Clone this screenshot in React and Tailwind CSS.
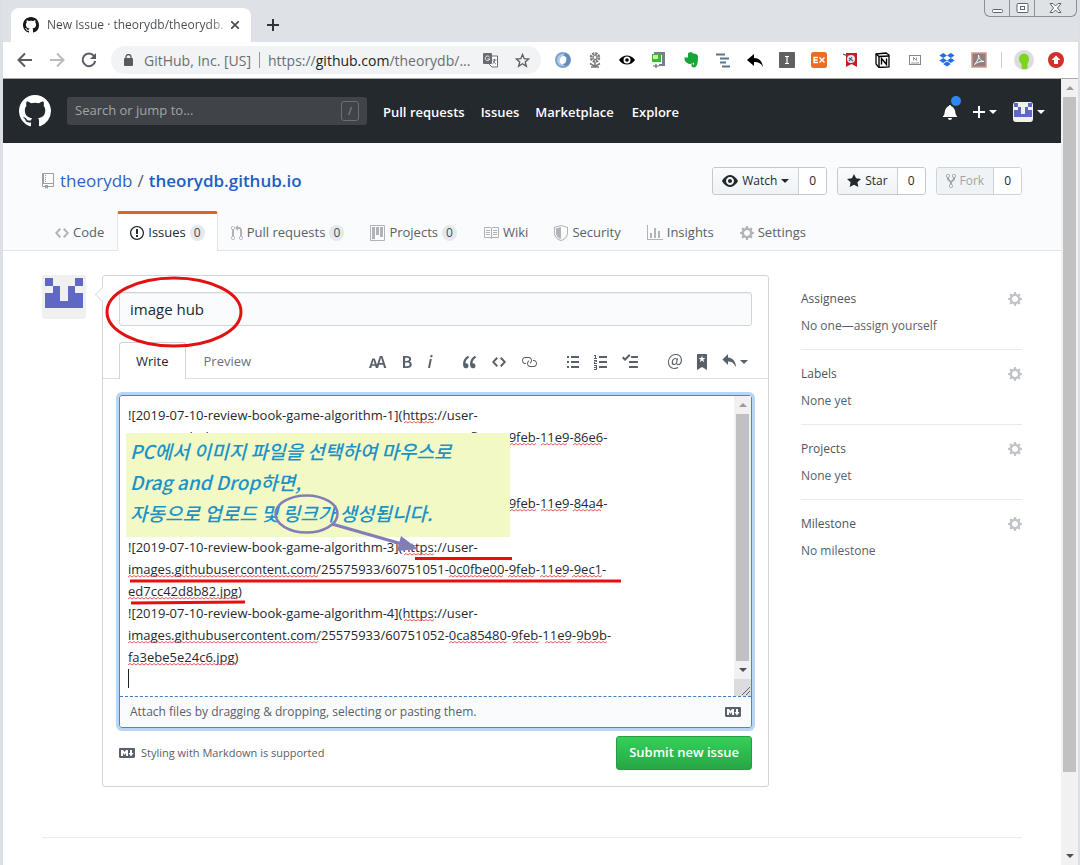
import React from "react";

const P = {
  mark: [16, "M8 0C3.58 0 0 3.58 0 8c0 3.54 2.29 6.53 5.47 7.59.4.07.55-.17.55-.38 0-.19-.01-.82-.01-1.49-2.01.37-2.53-.49-2.69-.94-.09-.23-.48-.94-.82-1.13-.28-.15-.68-.52-.01-.53.63-.01 1.08.58 1.23.82.72 1.21 1.87.87 2.33.66.07-.52.28-.87.51-1.07-1.78-.2-3.64-.89-3.64-3.95 0-.87.31-1.59.82-2.15-.08-.2-.36-1.02.08-2.12 0 0 .67-.21 2.2.82.64-.18 1.32-.27 2-.27.68 0 1.36.09 2 .27 1.53-1.04 2.2-.82 2.2-.82.44 1.1.16 1.92.08 2.12.51.56.82 1.27.82 2.15 0 3.07-1.87 3.75-3.65 3.95.29.25.54.73.54 1.48 0 1.07-.01 1.93-.01 2.2 0 .21.15.46.55.38A8.013 8.013 0 0 0 16 8c0-4.42-3.58-8-8-8z"],
  code: [14, "M9.5 3L8 4.5 11.5 8 8 11.5 9.5 13 14 8 9.5 3zm-5 0L0 8l4.5 5L6 11.5 2.5 8 6 4.5 4.5 3z"],
  issue: [14, "M7 2.3c3.14 0 5.7 2.56 5.7 5.7s-2.56 5.7-5.7 5.7A5.71 5.71 0 0 1 1.3 8c0-3.14 2.56-5.7 5.7-5.7zM7 1C3.14 1 0 4.14 0 8s3.14 7 7 7 7-3.14 7-7-3.14-7-7-7zm1 3H6v5h2V4zm0 6H6v2h2v-2z"],
  pull: [12, "M11 11.28V5c-.03-.78-.34-1.47-.94-2.06C9.46 2.35 8.78 2.03 8 2H7V0L4 3l3 3V4h1c.27.02.48.11.69.31.21.2.3.42.31.69v6.28A1.993 1.993 0 0 0 10 15a1.993 1.993 0 0 0 1-3.72zm-1 2.92c-.66 0-1.2-.55-1.2-1.2 0-.65.55-1.2 1.2-1.2.65 0 1.2.55 1.2 1.2 0 .65-.55 1.2-1.2 1.2zM4 3c0-1.11-.89-2-2-2a1.993 1.993 0 0 0-1 3.72v6.56A1.993 1.993 0 0 0 2 15a1.993 1.993 0 0 0 1-3.72V4.72c.59-.34 1-.98 1-1.72zm-.8 10c0 .66-.55 1.2-1.2 1.2-.65 0-1.2-.55-1.2-1.2 0-.65.55-1.2 1.2-1.2.65 0 1.2.55 1.2 1.2zM2 4.2C1.34 4.2.8 3.65.8 3c0-.65.55-1.2 1.2-1.2.65 0 1.2.55 1.2 1.2 0 .65-.55 1.2-1.2 1.2z"],
  project: [15, "M10 12h3V2h-3v10zm-4-2h3V2H6v8zm-4 4h3V2H2v12zm-1 1h13V1H1v14zM14 0H1a1 1 0 0 0-1 1v14a1 1 0 0 0 1 1h13a1 1 0 0 0 1-1V1a1 1 0 0 0-1-1z"],
  book: [16, "M3 5h4v1H3V5zm0 3h4V7H3v1zm0 2h4V9H3v1zm11-5h-4v1h4V5zm0 2h-4v1h4V7zm0 2h-4v1h4V9zm2-6v9c0 .55-.45 1-1 1H9.5l-1 1-1-1H2c-.55 0-1-.45-1-1V3c0-.55.45-1 1-1h5.5l1 1 1-1H15c.55 0 1 .45 1 1zm-8 .5L7.5 3H2v9h6V3.5zm7-.5H9.5l-.5.5V12h6V3z"],
  shield: [14, "M0 2l7-2 7 2v6.02C14 12.69 8.69 16 7 16c-1.69 0-7-3.31-7-7.98V2zm1 .75L7 1l6 1.75v5.268C13 12.104 8.449 15 7 15c-1.449 0-6-2.896-6-6.982V2.75zm1 .75L7 2v12c-1.207 0-5-2.482-5-5.985V3.5z"],
  graph: [16, "M16 14v1H0V0h1v14h15zM5 13H3V8h2v5zm4 0H7V3h2v10zm4 0h-2V6h2v7z"],
  gear: [14, "M14 8.77v-1.6l-1.94-.64-.45-1.09.88-1.84-1.13-1.13-1.81.91-1.09-.45-.69-1.92h-1.6l-.63 1.94-1.11.45-1.84-.88-1.13 1.13.91 1.81-.45 1.09L0 7.23v1.59l1.94.64.45 1.09-.88 1.84 1.13 1.13 1.81-.91 1.09.45.69 1.92h1.59l.63-1.94 1.11-.45 1.84.88 1.13-1.13-.92-1.81.47-1.09L14 8.75v.02zM7 11c-1.66 0-3-1.34-3-3s1.34-3 3-3 3 1.34 3 3-1.34 3-3 3z"],
  repo: [12, "M4 9H3V8h1v1zm0-3H3v1h1V6zm0-2H3v1h1V4zm0-2H3v1h1V2zm8-1v12c0 .55-.45 1-1 1H6v2l-1.5-1.5L3 16v-2H1c-.55 0-1-.45-1-1V1c0-.55.45-1 1-1h10c.55 0 1 .45 1 1zm-1 10H1v2h2v-1h3v1h5v-2zm0-10H2v9h9V1z"],
  eye: [16, "M8.06 2C3 2 0 8 0 8s3 6 8.06 6C13 14 16 8 16 8s-3-6-7.94-6zM8 12c-2.2 0-4-1.78-4-4 0-2.2 1.8-4 4-4 2.22 0 4 1.8 4 4 0 2.22-1.78 4-4 4zm2-4c0 1.11-.89 2-2 2-1.11 0-2-.89-2-2 0-1.11.89-2 2-2 1.11 0 2 .89 2 2z"],
  star: [14, "M14 6l-4.9-.64L7 1 4.9 5.36 0 6l3.6 3.26L2.67 14 7 11.67 11.33 14l-.93-4.74L14 6z"],
  fork: [10, "M8 1a1.993 1.993 0 0 0-1 3.72V6L5 8 3 6V4.72A1.993 1.993 0 0 0 2 1a1.993 1.993 0 0 0-1 3.72V6.5l3 3v1.78A1.993 1.993 0 0 0 5 15a1.993 1.993 0 0 0 1-3.72V9.5l3-3V4.72A1.993 1.993 0 0 0 8 1zM2 4.2C1.34 4.2.8 3.65.8 3c0-.65.55-1.2 1.2-1.2.65 0 1.2.55 1.2 1.2 0 .65-.55 1.2-1.2 1.2zm3 10c-.66 0-1.2-.55-1.2-1.2 0-.65.55-1.2 1.2-1.2.65 0 1.2.55 1.2 1.2 0 .65-.55 1.2-1.2 1.2zm3-10c-.66 0-1.2-.55-1.2-1.2 0-.65.55-1.2 1.2-1.2.65 0 1.2.55 1.2 1.2 0 .65-.55 1.2-1.2 1.2z"],
  bell: [14, "M13.99 11.991v1H0v-1l.73-.58c.769-.769.809-2.547 1.189-4.416.77-3.767 4.077-4.996 4.077-4.996 0-.55.45-1 .999-1 .55 0 1 .45 1 1 0 0 3.387 1.229 4.156 4.996.38 1.879.42 3.657 1.19 4.417l.659.58h-.01zM6.995 15.99c1.11 0 1.999-.89 1.999-1.999H4.996c0 1.11.89 1.999 1.999 1.999z"],
  plus: [12, "M12 9H7v5H5V9H0V7h5V2h2v5h5v2z"],
  size: [18, "M13.62 9.08L12.1 3.66h-.06l-1.5 5.42h3.08zM5.7 10.13S4.68 6.52 4.53 6.02h-.08l-1.13 4.11H5.7zM17.31 14h-2.25l-.95-3.25h-4.07L9.09 14H6.84l-.69-2.33H2.87L2.17 14H0l3.3-9.59h2.5l2.17 6.34L10.86 2h2.52l3.94 12h-.01z"],
  bold: [10, "M1 2h3.83c2.48 0 4.3.75 4.3 2.95 0 1.14-.63 2.23-1.67 2.61v.06c1.33.3 2.3 1.23 2.3 2.86 0 2.39-1.97 3.52-4.61 3.52H1V2zm3.66 4.95c1.67 0 2.38-.66 2.38-1.69 0-1.17-.78-1.61-2.34-1.61H3.13v3.3h1.53zm.27 5.39c1.77 0 2.75-.64 2.75-1.98 0-1.27-.95-1.81-2.75-1.81h-1.8v3.8h1.8v-.01z"],
  italic: [6, "M2.81 5h1.98L3 14H1l1.81-9zm.36-2.7c0-.7.58-1.3 1.33-1.3.56 0 1.13.38 1.13 1.03 0 .75-.59 1.3-1.33 1.3-.58 0-1.13-.38-1.13-1.03z"],
  quote: [14, "M6.16 3.5C3.73 5.06 2.55 6.67 2.55 9.36c.16-.05.3-.05.44-.05 1.27 0 2.5.86 2.5 2.41 0 1.61-1.03 2.61-2.5 2.61-1.9 0-2.99-1.52-2.99-4.25 0-3.8 1.75-6.53 5.02-8.42L6.16 3.5zm7 0c-2.43 1.56-3.61 3.17-3.61 5.86.16-.05.3-.05.44-.05 1.27 0 2.5.86 2.5 2.41 0 1.61-1.03 2.61-2.5 2.61-1.89 0-2.98-1.52-2.98-4.25 0-3.8 1.75-6.53 5.02-8.42l1.14 1.84h-.01z"],
  link: [16, "M4 9h1v1H4c-1.5 0-3-1.69-3-3.5S2.55 3 4 3h4c1.45 0 3 1.69 3 3.5 0 1.41-.91 2.72-2 3.25V8.59c.58-.45 1-1.27 1-2.09C10 5.22 8.98 4 8 4H4c-.98 0-2 1.22-2 2.5S3 9 4 9zm9-3h-1v1h1c1 0 2 1.22 2 2.5S13.98 12 13 12H9c-.98 0-2-1.22-2-2.5 0-.83.42-1.64 1-2.09V6.25c-1.09.53-2 1.84-2 3.25C6 11.31 7.55 13 9 13h4c1.45 0 3-1.69 3-3.5S14.5 6 13 6z"],
  list: [12, "M0 2h2v2H0zM4 2h8v2H4zM0 7h2v2H0zM4 7h8v2H4zM0 12h2v2H0zM4 12h8v2H4z"],
  ordered: [13, "M5 2h8v2H5zM5 7h8v2H5zM5 12h8v2H5zM1 1h1v3h1v1H0V4h1V2H0V1zM0 6h3v2H1v1h2v1H0V7.500h2V7H0zM0 11h3v5H0v-1h2v-1H0v-1h2v-1H0z"],
  tasks: [16, "M15.41 9H7.59C7 9 7 8.59 7 8c0-.59 0-1 .59-1h7.81c.59 0 .59.41.59 1 0 .59 0 1-.59 1h.01zM9.59 4C9 4 9 3.59 9 3c0-.59 0-1 .59-1h5.81c.59 0 .59.41.59 1 0 .59 0 1-.59 1H9.59zM0 3.91l1.41-1.3L3 4.2 7.09 0 8.5 1.41 3 6.91l-3-3zm7.59 8.09h7.81c.59 0 .59.41.59 1 0 .59 0 1-.59 1H7.59C7 14 7 13.59 7 13c0-.59 0-1 .59-1z"],
  mention: [14, "M6.58 15c1.25 0 2.52-.31 3.56-.94l-.42-.94c-.84.52-1.89.83-3.03.83-3.23 0-5.64-2.08-5.64-5.72 0-4.37 3.23-7.18 6.58-7.18 3.45 0 5.22 2.19 5.22 5.2 0 2.39-1.34 3.86-2.5 3.86-1.05 0-1.36-.73-1.05-2.19l.73-3.75H8.98l-.11.72c-.41-.63-.94-.83-1.56-.83-2.19 0-3.66 2.39-3.66 4.38 0 1.67.94 2.61 2.3 2.61.84 0 1.67-.53 2.3-1.25.11.94.94 1.45 1.98 1.45 1.67 0 3.77-1.67 3.77-5C14 2.61 11.59 0 7.83 0 3.66 0 0 3.33 0 8.33 0 12.71 2.92 15 6.58 15zm-.31-5c-.73 0-1.36-.52-1.36-1.67 0-1.45.94-3.22 2.41-3.22.52 0 .84.2 1.25.83l-.52 3.02c-.63.73-1.25 1.05-1.78 1.05V10z"],
  bookmark: [10, "M9 0H1C.27 0 0 .27 0 1v15l5-3.09L10 16V1c0-.73-.27-1-1-1zm-.78 4.25L6.36 5.61l.72 2.16c.06.22-.02.28-.2.17L5 6.6 3.12 7.94c-.19.11-.25.05-.2-.17l.72-2.16-1.86-1.36c-.17-.16-.14-.23.09-.23l2.3-.03.7-2.16h.25l.7 2.16 2.3.03c.23 0 .27.08.09.23h.01z"],
  reply: [14, "M6 3.5c3.92.44 8 3.125 8 10-2.312-5.062-4.75-6-8-6V11L.5 5.5 6 0v3.5z"],
  markdown: [16, "M14.85 3H1.15C.52 3 0 3.52 0 4.15v7.69C0 12.48.52 13 1.15 13h13.69c.64 0 1.15-.52 1.15-1.15v-7.7C16 3.52 15.48 3 14.85 3zM9 11H7V8L5.5 9.92 4 8v3H2V5h2l1.5 2L7 5h2v6zm2.99.5L9.5 8H11V5h2v3h1.500l-2.51 3.500z"],
};

function Oct({ name, size = 16, className = "" }) {
  const [w, d] = P[name];
  return (
    <svg aria-hidden="true" className={`shrink-0 ${className}`} width={(w * size) / 16} height={size} viewBox={`0 0 ${w} 16`} fill="currentColor">
      <path fillRule="evenodd" d={d} />
    </svg>
  );
}

function Caret({ className = "" }) {
  return <span aria-hidden="true" className={`inline-block border-x-4 border-t-4 border-x-transparent border-t-current ${className}`} />;
}

function Identicon({ className }) {
  return (
    <svg aria-hidden="true" className={className} viewBox="0 0 44 44" shapeRendering="crispEdges">
      <rect width="44" height="44" fill="#f0f0f0" />
      <path fill="#5f68c3" d="M3 3h8v8H3zM33 3h8v8h-8zM11 11h7v15h8V11h7v7h8v15H3V18h8z" />
    </svg>
  );
}

const extensions = [
  ["Dashboard", <><circle cx="8" cy="8" r="8" fill="#7fa2cb" /><circle cx="8" cy="8" r="6" fill="#b4cce6" /><path d="M10 1a7 7 0 0 1 3 12c-2 1-4 1-5-1 3 0 4-3 3-6-1-1-2-1-3-1z" fill="#5f8cbb" /><ellipse cx="8" cy="8" rx="3" ry="4" fill="#fff" transform="rotate(25 8 8)" /></>],
  ["Flower", <g fill="none" stroke="#777"><circle cx="8" cy="5.500" r="4" strokeWidth="2.500" strokeDasharray="2.200 .9" /><circle cx="8" cy="5.500" r="2" strokeWidth="1.200" /><path d="M8 10v5M3 11.500l5 3 5-3M4 15h8" strokeWidth="1.500" /></g>],
  ["Viewer", <><path d="M0 8c4-6 12-6 16 0-4 6-12 6-16 0z" fill="#000" /><circle cx="8" cy="8" r="3.500" fill="#fff" /><circle cx="8" cy="8" r="1.800" fill="#000" /></>],
  ["Capture", <><path d="M3 3V0h11v14H8v-2h3V3z" fill="#74808b" /><rect x="1" y="2" width="9" height="8" fill="#3fb634" /><rect x="2" y="3" width="5" height="4" fill="#c3f4a4" /><path d="M2 14h6M5 12v4" stroke="#667" strokeWidth="1.200" /></>],
  ["Evernote", <path d="M5 1.500C6 .2 9-.2 10 1.500c3 .3 5 .8 5 3 0 4-.3 11-4 11-3.200 0-3.600-4-.8-4v1.600c1 .1 1.300-2 .2-2.600-.8 1.500-3 1.700-5 1.200C2.500 11 1 7.500 1.500 5.500H5z" fill="#14a637" />],
  ["Outline", <path d="M1 2.500h9M5 6.500h9M5 10.500h6M7 14.500h8" stroke="#55798a" strokeWidth="2" fill="none" />],
  ["Reply", <path d="M7 2v4c5 0 8 3 9 9-2-4-5-5-9-5v4L0 8z" fill="#000" />],
  ["Instapaper", <><rect width="16" height="16" rx="1" fill="#606060" /><path d="M6 4.500h4M8 4.500v7M6 11.500h4" stroke="#fff" strokeWidth="1.200" /></>],
  ["Exporter", <><rect width="16" height="16" rx="2.500" fill="#ed6c23" /><path d="M7 5.500H3v5h4M3 8h3.500M8.500 5.500l5 5M13.500 5.500l-5 5" stroke="#fff" strokeWidth="1.400" fill="none" /></>],
  ["Ribbon", <><path d="M3 1h11v14l-5.500-3L3 15z" fill="#c41e20" /><circle cx="8" cy="7" r="4" fill="#e3e7ee" /><path d="M0 2l5 2M6 6l4 3M9 5l-3 4" stroke="#48607e" strokeWidth="1.200" /></>],
  ["Notion", <><path d="M1 2l10-1 3 2v12l-10 .500L1 12z" fill="#fff" stroke="#000" strokeWidth="1.300" /><path d="M1 2l3 2.500V15M3.500 4.500L14 4M6.500 12.500v-6l5 6v-6" stroke="#000" strokeWidth="1.400" fill="none" /></>],
  ["Keyboard", <><rect x="2.500" y="3.500" width="11" height="9" fill="#fff" stroke="#888" /><path d="M6.500 8.500v-3l3 3v-3M4 11h8" stroke="#999" fill="none" /></>],
  ["Dropbox", <path d="M4.200 1L8 3.500 4.200 6 .4 3.500zM11.800 1l3.800 2.500L11.800 6 8 3.500zM4.200 6L8 8.500 4.200 11 .4 8.500zM11.800 6l3.800 2.500-3.800 2.500L8 8.500zM8 9.500l3.800 2.500L8 14.500 4.200 12z" fill="#1f6ee8" />],
  ["Acrobat", <><rect x="1" y="1" width="14" height="14" fill="#8a8080" stroke="#d6958b" strokeWidth="1.500" /><path d="M7.500 3c1 3-2 7-4 9.500 2-2 6-3.500 9.500-3-3 0-5-3-5.500-6.500z" stroke="#fff" fill="none" /></>],
];

function BrowserChrome() {
  return (
    <header>
      <div className="flex h-[42px] items-start justify-between pl-2">
        <div className="flex items-center pt-2">
          <div className="flex h-[34px] min-w-60 items-center rounded-t-lg bg-white pl-3 pr-2 text-[#45494d]">
            <Oct name="mark" className="text-[#15171a]" />
            <span className="ml-2 flex-1 whitespace-nowrap bg-linear-to-r from-[#45494d] from-90% to-[#dddddd] bg-clip-text text-[12px] text-transparent">New Issue · theorydb/theorydb.</span>
            <button aria-label="Close tab" className="p-1">
              <svg width="8" height="8" viewBox="0 0 8 8" stroke="#45494d" strokeWidth="1.600"><path d="M0 0l8 8M8 0L0 8" /></svg>
            </button>
          </div>
          <button aria-label="New tab" className="ml-4">
            <svg width="12" height="12" viewBox="0 0 12 12" stroke="#303438" strokeWidth="2"><path d="M6 0v12M0 6h12" /></svg>
          </button>
        </div>
        <div className="mr-px flex h-[17px] divide-x divide-[#8b8f96] rounded-b-md border border-t-0 border-[#8b8f96]">
          <button aria-label="Minimize" className="flex w-[25px] items-center justify-center">
            <svg width="13" height="13" fill="#fff" stroke="#60656b"><rect x="1.500" y="7.500" width="10" height="3" rx="1" /></svg>
          </button>
          <button aria-label="Maximize" className="flex w-[25px] items-center justify-center">
            <svg width="13" height="13" fill="#fff" stroke="#60656b"><rect x="1" y="1.500" width="11" height="9" rx="1" /><rect x="4.500" y="4.500" width="4" height="3" /></svg>
          </button>
          <button aria-label="Close" className="flex w-[41px] items-center justify-center">
            <svg width="13" height="13" fill="#fff" stroke="#60656b"><path d="M1 1.500h3L6.500 4 9 1.500h3L8.500 6l3.500 4.500H9L6.500 8 4 10.500H1L4.500 6z" /></svg>
          </button>
        </div>
      </div>
      <div className="flex h-[37px] items-center border-b border-[#a9a9ab] bg-white pl-[14px] pr-[14px]">
        <div className="flex gap-4 text-[#585c61]">
          <button aria-label="Back"><svg width="16" height="16" viewBox="0 0 16 16" fill="none" stroke="currentColor" strokeWidth="2"><path d="M15 8H2M8 1.500L1.500 8 8 14.500" /></svg></button>
          <button aria-label="Forward" className="text-[#b9bbbe]"><svg width="16" height="16" viewBox="0 0 16 16" fill="none" stroke="currentColor" strokeWidth="2"><path d="M1 8h13M8 1.500L14.500 8 8 14.500" /></svg></button>
          <button aria-label="Reload"><svg width="16" height="16" viewBox="0 0 16 16" fill="none" stroke="currentColor" strokeWidth="2"><path d="M13 4a6.300 6.300 0 1 0 1.200 5" /><path d="M15 1v6H9z" fill="currentColor" stroke="none" /></svg></button>
        </div>
        <div className="ml-[14px] flex h-7 min-w-0 flex-1 items-center rounded-full bg-[#f1f3f4] pl-[13px] pr-[11px] text-[14px] text-[#6a6e73]">
          <svg aria-hidden="true" width="9" height="12" viewBox="0 0 9 12"><rect y="4" width="9" height="8" rx="1" fill="#585c61" /><path d="M2 5V3a2.500 2.500 0 0 1 5 0v2" fill="none" stroke="#585c61" strokeWidth="1.300" /></svg>
          <span className="ml-[11px] whitespace-nowrap">GitHub, Inc. [US]</span>
          <span className="mx-2 h-4 w-px bg-[#94979b]" />
          <span className="min-w-0 flex-1 truncate">https://<span className="text-[#202427]">github.com</span>/theorydb/...</span>
          <button aria-label="Translate" className="mr-[17px]">
            <svg width="15" height="15" viewBox="0 0 15 15"><path d="M6 3h8.500v11H9L6 11z" fill="#fff" stroke="#686c70" /><rect width="9" height="11" rx="1" fill="#686c70" /><path d="M6.500 4a2.300 2.300 0 1 0 .3 2H4.500" fill="none" stroke="#f1f3f4" /><path d="M9.500 7h4M11.500 6v1c0 2-1 3.500-2 4M10.500 8c1 2 1.500 2.500 2.500 3" fill="none" stroke="#686c70" /></svg>
          </button>
          <button aria-label="Bookmark this page">
            <svg width="15" height="15" viewBox="0 0 15 15" fill="none" stroke="#585c61" strokeWidth="1.300"><path d="M7.500 1.500l1.700 4.200 4.500.3-3.500 2.900 1.200 4.400-3.900-2.500-3.900 2.500 1.200-4.400L1.300 6l4.500-.3z" /></svg>
          </button>
        </div>
        <div className="ml-[14px] flex items-center gap-4">
          {extensions.map(([label, art]) => (
            <button key={label} aria-label={label}><svg width="16" height="16" viewBox="0 0 16 16">{art}</svg></button>
          ))}
        </div>
        <span className="ml-[14px] mr-3 h-4 w-px bg-[#c8cacd]" />
        <button aria-label="Profile" className="mr-[14px]">
          <svg width="20" height="20" viewBox="0 0 20 20"><circle cx="10" cy="10" r="10" fill="#dcdcdc" /><path d="M5 9a5 5.500 0 0 1 10 0c0 3-1.500 4-1.500 5v4.500a9 9 0 0 1-6 0V14C6.500 12.500 5 12 5 9z" fill="#7ed321" /></svg>
        </button>
        <button aria-label="Update">
          <svg width="16" height="16" viewBox="0 0 16 16"><circle cx="8" cy="8" r="8" fill="#d1302a" /><path d="M8 3.500l4.500 4.500H10v4H6V8H3.500z" fill="#fff" /></svg>
        </button>
      </div>
    </header>
  );
}

function SiteHeader() {
  return (
    <div className="flex h-16 items-center bg-[#24292e] px-4 text-white">
      <a href="#home" aria-label="Homepage"><Oct name="mark" size={32} /></a>
      <label className="ml-4 flex h-7 w-[300px] items-center rounded-[3px] bg-[#404448] pl-2 pr-2">
        <input aria-label="Search" placeholder="Search or jump to..." className="min-w-0 flex-1 bg-transparent text-[13px] outline-none placeholder:text-[#a2a4a6]" />
        <span className="flex h-5 w-[18px] items-center justify-center rounded-[3px] border border-[#6b6f73] text-[11px] text-[#8f9296]">/</span>
      </label>
      <nav className="ml-4 flex gap-4 pt-[3px] text-[13px] font-semibold">
        <a href="#pulls">Pull requests</a>
        <a href="#issues">Issues</a>
        <a href="#marketplace">Marketplace</a>
        <a href="#explore" className="ml-[2px]">Explore</a>
      </nav>
      <div className="ml-auto flex items-center pt-[2px]">
        <button aria-label="Notifications" className="relative mr-4">
          <Oct name="bell" />
          <span className="absolute -top-2 left-2 size-[10px] rounded-full bg-[#2f86f6]" />
        </button>
        <button aria-label="Create new" className="mr-4 flex items-center"><Oct name="plus" /><Caret className="ml-1" /></button>
        <button aria-label="Account menu" className="flex items-center"><Identicon className="size-5 rounded-[3px]" /><Caret className="ml-1" /></button>
      </div>
    </div>
  );
}

function CountButton({ icon, label, caret, disabled }) {
  return (
    <div className={`flex h-7 rounded-[3px] border text-[12px] ${disabled ? "border-[#cfd2d6]" : "border-[#c5c8cc]"}`}>
      <button disabled={disabled} className={`flex items-center gap-1 rounded-l-[2px] border-r border-[#cccfd3] px-[9px] ${disabled ? "bg-[#eff3f6] text-[#9fa4a9]" : "bg-linear-to-b from-[#fafbfc] to-[#eff3f6] font-medium text-[#24292e]"}`}>
        <Oct name={icon} />{label}{caret && <Caret />}
      </button>
      <a href="#count" className="flex items-center rounded-r-[2px] bg-white px-[10px] text-[#24292e]">0</a>
    </div>
  );
}

const tabs = [
  ["code", "Code"], ["issue", "Issues", 0], ["pull", "Pull requests", 0], ["project", "Projects", 0],
  ["book", "Wiki"], ["shield", "Security"], ["graph", "Insights"], ["gear", "Settings"],
];

function RepoHead() {
  return (
    <div className="border-b border-[#e1e4e8] bg-[#fafbfc] pt-6">
      <div className="mx-auto w-full max-w-[980px]">
        <div className="flex h-7 items-center justify-between">
          <h1 className="flex items-center whitespace-nowrap text-[17px] text-[#586069]">
            <Oct name="repo" className="mr-[6px] text-[#9a9fa4]" />
            <a href="#owner" className="text-[#2a65c4]">theorydb</a>
            <span className="mx-[5px]">/</span>
            <a href="#repo" className="font-semibold text-[#2060c2]">theorydb.github.io</a>
          </h1>
          <div className="flex gap-[10px]">
            <CountButton icon="eye" label="Watch" caret />
            <CountButton icon="star" label="Star" />
            <CountButton icon="fork" label="Fork" disabled />
          </div>
        </div>
        <nav className="-mb-px mt-4 flex">
          {tabs.map(([icon, label, count]) => {
            const on = label === "Issues";
            return (
              <a key={label} href="#tab" className={`flex h-10 items-center gap-1 whitespace-nowrap rounded-t-[3px] border-x border-t-[3px] px-3 text-[13px] ${on ? "border-x-[#e1e4e8] border-t-[#d5662a] bg-white text-[#24292e]" : "border-transparent text-[#586069]"}`}>
                <Oct name={icon} className={on ? "" : "text-[#b0b4b8]"} />
                {label}
                {count !== undefined && <span className="flex h-4 min-w-[15px] items-center justify-center rounded-full bg-[#e6e9ec] text-[12px] font-medium text-[#444d56]">{count}</span>}
              </a>
            );
          })}
        </nav>
      </div>
    </div>
  );
}

const body = `![2019-07-10-review-book-game-algorithm-1](https://user-
images.githubusercontent.com/25575933/60751048-0c0fbe00-9feb-11e9-86e6-
3cd2b95e9f10.jpg)
![2019-07-10-review-book-game-algorithm-2](https://user-
images.githubusercontent.com/25575933/60751050-0c0fbe00-9feb-11e9-84a4-
7be0cd81f2a5.jpg)
![2019-07-10-review-book-game-algorithm-3](https://user-
images.githubusercontent.com/25575933/60751051-0c0fbe00-9feb-11e9-9ec1-
ed7cc42d8b82.jpg)
![2019-07-10-review-book-game-algorithm-4](https://user-
images.githubusercontent.com/25575933/60751052-0ca85480-9feb-11e9-9b9b-
fa3ebe5e24c6.jpg)
`;

const misspelled = [
  [423, [[404, 434]]],
  [445, [[510, 536], [541, 567], [573, 601]]],
  [511, [[510, 536], [541, 567], [573, 601]]],
  [555, [[404, 434]]],
  [577, [[128, 318], [449, 503], [508, 534], [540, 566], [572, 601]]],
  [599, [[128, 238]]],
  [621, [[404, 434]]],
  [643, [[128, 318], [449, 507], [513, 539], [545, 571], [577, 606]]],
  [665, [[128, 235]]],
];

function wave(y, [from, to]) {
  let d = `M${from} ${y}`;
  for (let x = from, up = true; x < to; x += 2, up = !up) d += `l2 ${up ? -1.5 : 1.5}`;
  return d;
}

function Annotations() {
  return (
    <svg aria-hidden="true" className="pointer-events-none absolute inset-0 size-full overflow-visible" fill="none">
      <g transform="translate(-103 -276)">
        <path stroke="#df5e62" d={misspelled.flatMap(([y, spans]) => spans.map((s) => wave(y, s))).join("")} />
        <path d="M128.500 669v19" stroke="#222" />
        <ellipse cx="174" cy="312" rx="67" ry="34" stroke="#e01212" strokeWidth="3" />
        <path d="M415 558.500h97M130 581h491M131 603l114-1" stroke="#e60f0f" strokeWidth="3" />
      </g>
    </svg>
  );
}

function Note() {
  return (
    <div className="absolute left-[23px] top-[157px] h-[104px] w-[384px] bg-[#f3f9c5] pl-1 pt-[2px] font-['Noto_Sans_CJK_KR',sans-serif] text-[19px] font-medium italic leading-[31px] whitespace-nowrap text-[#1b93c7]">
      <p>PC에서 이미지 파일을 선택하여 마우스로</p>
      <p>Drag and Drop하면,</p>
      <p>자동으로 업로드 및 링크가 생성됩니다.</p>
      <svg aria-hidden="true" className="pointer-events-none absolute inset-0 size-full overflow-visible" fill="none">
        <g transform="translate(-126 -433)">
          <ellipse cx="306.500" cy="514" rx="31" ry="18.500" stroke="#817db8" strokeWidth="2.500" />
          <path d="M332 524l70 20" stroke="#817db8" strokeWidth="3" />
          <path d="M401 536l17 13-21 2z" fill="#817db8" />
        </g>
      </svg>
    </div>
  );
}

const tools = [
  [["size", "Header"], ["bold", "Bold"], ["italic", "Italic"]],
  [["quote", "Quote"], ["code", "Code"], ["link", "Link"]],
  [["list", "Bulleted list"], ["ordered", "Numbered list"], ["tasks", "Task list"]],
  [["mention", "Mention"], ["bookmark", "Reference"]],
];

function IssueForm() {
  return (
    <form className="relative min-w-0 flex-1 rounded-[3px] border border-[#d1d5da] bg-white p-4" onSubmit={(e) => e.preventDefault()}>
      <span aria-hidden="true" className="absolute -left-[6px] top-[13px] size-[11px] rotate-45 border-b border-l border-[#dfe2e5] bg-[#fafbfc]" />
      <input aria-label="Title" defaultValue="image hub" className="block h-[34px] w-full rounded-[3px] border border-[#d1d5da] bg-[#fafbfc] px-[10px] text-[15px] text-[#24292e] inset-shadow-2xs outline-none" />
      <div className="-mx-4 mt-4 flex items-end border-b border-[#dcdfe3] px-4">
        <button type="button" className="-mb-px h-[37px] rounded-t-[3px] border border-b-0 border-[#d1d5da] bg-white px-4 pt-[2px] text-[13px] text-[#24292e]">Write</button>
        <button type="button" className="h-9 px-[18px] pt-[3px] text-[13px] text-[#6a737d]">Preview</button>
        <div className="ml-auto flex h-9 items-center gap-[30px] pr-1 pt-[3px] text-[#586069]">
          {tools.map((group, i) => (
            <div key={i} className="flex gap-[15px]">
              {group.map(([icon, label]) => <button type="button" key={icon} aria-label={label}><Oct name={icon} /></button>)}
              {i === 3 && <button type="button" aria-label="Saved replies" className="flex items-center gap-1"><Oct name="reply" /><Caret /></button>}
            </div>
          ))}
        </div>
      </div>
      <div className="mt-4 rounded-[3px] border border-[#3f8ad8] ring-3 ring-[#b9d5f5]">
        <div className="flex h-[300px] rounded-t-[3px] bg-white">
          <textarea aria-label="Comment body" defaultValue={body} spellCheck={false} className="block min-w-0 flex-1 resize-none overflow-hidden whitespace-pre px-2 py-2 text-[13px] leading-[22px] text-[#24292e] outline-none" />
          <div aria-hidden="true" className="flex w-[17px] flex-col items-center bg-[#f1f1f1]">
            <span className="my-[7px] border-x-4 border-b-4 border-x-transparent border-b-[#9a9a9a]" />
            <span className="w-[13px] flex-1 bg-[#c1c1c1]" />
            <span className="my-[7px] border-x-4 border-t-4 border-x-transparent border-t-[#505050]" />
            <svg width="17" height="17" className="bg-[#dcdcdc]"><path d="M8 16l8-8M12 16l4-4" stroke="#666" /></svg>
          </div>
        </div>
        <div className="flex h-[31px] items-center justify-between rounded-b-[3px] border-t border-dashed border-[#3f7fc4] bg-[#fafbfc] px-[10px] text-[12px] text-[#586069]">
          <span>Attach files by dragging &amp; dropping, selecting or pasting them.</span>
          <Oct name="markdown" />
        </div>
      </div>
      <div className="mt-2 flex items-center justify-between">
        <a href="#markdown" className="flex items-center gap-[6px] text-[11px] text-[#586069]"><Oct name="markdown" />Styling with Markdown is supported</a>
        <button className="h-[34px] rounded-[3px] border border-[#2a9a44] bg-linear-to-b from-[#34d058] to-[#28a745] px-3 text-[13px] font-semibold text-white">Submit new issue</button>
      </div>
      <Annotations />
      <Note />
    </form>
  );
}

const sidebar = [
  ["Assignees", "No one—assign yourself"], ["Labels", "None yet"], ["Projects", "None yet"], ["Milestone", "No milestone"],
];

export default function App() {
  return (
    <div className="flex min-h-screen flex-col overflow-hidden border-l-[3px] border-r-2 border-[#dce0e5] bg-[#dee1e6] font-['Open_Sans','Noto_Sans_CJK_KR',sans-serif]">
      <BrowserChrome />
      <div className="flex flex-1">
        <div className="flex min-w-0 flex-1 flex-col bg-white">
          <SiteHeader />
          <RepoHead />
          <main className="mx-auto mt-6 flex w-full max-w-[980px] items-start">
            <Identicon className="mr-4 size-11 shrink-0 rounded-[3px]" />
            <IssueForm />
            <aside className="ml-8 w-[221px] text-[12px] text-[#586069]">
              {sidebar.map(([title, value]) => (
                <section key={title} className="border-b border-[#e6ebf1] pb-[14px] pt-[15px] leading-[18px] last:border-0">
                  <h2 className="flex items-center justify-between font-medium text-[#4d555d]">
                    {title}
                    <button aria-label={`Edit ${title}`} className="text-[#c0c4c8]"><Oct name="gear" /></button>
                  </h2>
                  <p className="mt-[9px]">{value}</p>
                </section>
              ))}
            </aside>
          </main>
          <footer className="mx-auto mt-[50px] w-full max-w-[980px] border-t border-[#eaecef]" />
        </div>
        <div aria-hidden="true" className="flex w-[17px] flex-col items-center bg-[#f1f1f1]">
          <span className="my-[7px] border-x-4 border-b-4 border-x-transparent border-b-[#9a9a9a]" />
          <span className="w-[13px] grow-9 bg-[#c1c1c1]" />
          <span className="grow" />
          <span className="my-[7px] border-x-4 border-t-4 border-x-transparent border-t-[#505050]" />
        </div>
      </div>
    </div>
  );
}
